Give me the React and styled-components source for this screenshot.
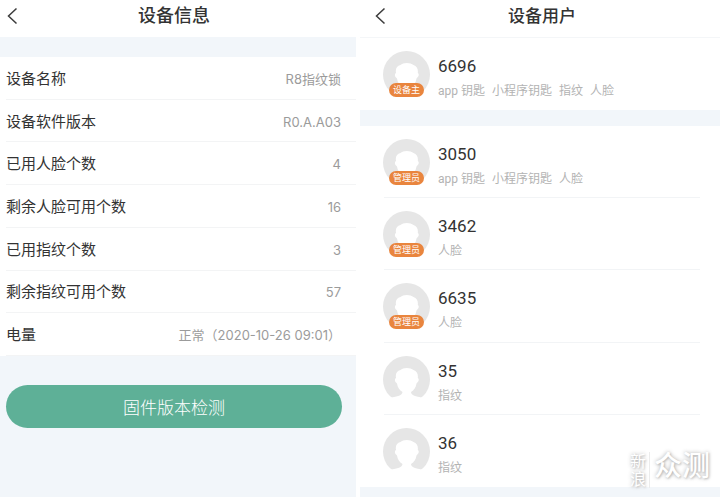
import React from "react";
import styled, { createGlobalStyle } from "styled-components";

const GlobalStyle = createGlobalStyle`
  *, *::before, *::after { box-sizing: border-box; }
  body {
    margin: 0;
    background: #ffffff;
    color: #333333;
    font-family: Inter, "Noto Sans CJK SC", sans-serif;
  }
  h1, h2, p, dl, dd, dt, ul { margin: 0; padding: 0; }
  ul { list-style: none; }
`;

const Page = styled.div`
  position: relative;
  display: grid;
  grid-template-columns: 356fr 360fr;
  column-gap: 4px;
  min-height: 100vh;
`;

const Screen = styled.section`
  display: flex;
  flex-direction: column;
  background: #f2f6fa;
`;

const Header = styled.header`
  display: grid;
  grid-template-columns: 40px 1fr 40px;
  align-items: center;
  height: ${(p) => (p.$lined ? 38 : 37)}px;
  padding: 0 ${(p) => (p.$lined ? 8 : 12)}px 5px ${(p) => (p.$lined ? 12 : 4)}px;
  background: #ffffff;
  border-bottom: ${(p) => (p.$lined ? "1px solid #f4f6f8" : "0")};
`;

const BackButton = styled.button`
  display: flex;
  justify-self: start;
  padding: 0 3px;
  border: 0;
  background: none;
  color: #3c3c3c;
`;

const Title = styled.h1`
  font-size: ${(p) => p.$size}px;
  font-weight: 500;
  line-height: 24px;
  text-align: center;
`;

const InfoList = styled.dl`
  display: grid;
  grid-auto-rows: 1fr;
  min-height: 299px;
  margin-top: 20px;
  padding-left: 6px;
  background: #ffffff;
`;

const InfoRow = styled.div`
  display: flex;
  align-items: center;
  justify-content: space-between;
  padding: 2px 15px 0 0;
  border-bottom: 1px solid #f3f4f5;
`;

const InfoLabel = styled.dt`
  font-size: 15px;
  line-height: 22px;
`;

const InfoValue = styled.dd`
  color: #9b9b9b;
  font-size: 13px;
  line-height: 20px;
`;

const CheckButton = styled.button`
  height: 43px;
  margin: 29px 14px 0 6px;
  border: 0;
  border-radius: 22px;
  background: #5eb097;
  color: #ffffff;
  font-family: inherit;
  font-size: 17px;
  font-weight: 300;
`;

const UserList = styled.ul`
  display: grid;
  grid-auto-rows: 1fr;
  min-height: ${(p) => (p.$owner ? 72 : 361)}px;
  margin-bottom: ${(p) => (p.$owner ? 16 : 0)}px;
  padding: 0 20px 0 24px;
  background: #ffffff;
`;

const UserRow = styled.li`
  display: flex;
  align-items: flex-start;
  gap: 8px;
  padding-top: 13px;
  border-bottom: 1px solid #f2f4f6;

  &:last-child { border-bottom: 0; }
`;

const AvatarBox = styled.div`
  position: relative;
  width: 47px;
  height: 47px;
  margin-left: -1px;
`;

const Badge = styled.span`
  position: absolute;
  bottom: 1px;
  left: 6px;
  width: 35px;
  border-radius: 7px;
  background: #e9853e;
  color: #ffffff;
  font-size: 9px;
  line-height: 14px;
  text-align: center;
`;

const UserName = styled.h2`
  padding-top: 4px;
  font-family: Roboto, "Noto Sans CJK SC", sans-serif;
  font-size: 17px;
  font-weight: 400;
  line-height: 22px;
`;

const KeyList = styled.p`
  display: flex;
  gap: 7px;
  padding-top: 4px;
  color: #b3b3b3;
  font-family: Roboto, "Noto Sans CJK SC", sans-serif;
  font-size: 12px;
  line-height: 20px;
`;

const Watermark = styled.div`
  position: absolute;
  right: 10px;
  bottom: 9px;
  display: flex;
  align-items: flex-start;
  gap: 4px;
  color: #ffffff;
  text-shadow: 0 0 4px #b0b0b0, 1px 1px 2px #cccccc;
`;

const WatermarkSide = styled.span`
  width: 20px;
  padding-right: 4px;
  border-right: 1px solid #ececec;
  font-size: 16px;
  line-height: 18px;
`;

const WatermarkMain = styled.span`
  font-size: 28px;
  font-weight: 500;
  line-height: 28px;
`;

const info = [
  ["设备名称", "R8指纹锁"],
  ["设备软件版本", "R0.A.A03"],
  ["已用人脸个数", "4"],
  ["剩余人脸可用个数", "16"],
  ["已用指纹个数", "3"],
  ["剩余指纹可用个数", "57"],
  ["电量", "正常（2020-10-26 09:01）"],
];

const owner = [
  { name: "6696", role: "设备主", keys: ["app 钥匙", "小程序钥匙", "指纹", "人脸"] },
];

const members = [
  { name: "3050", role: "管理员", keys: ["app 钥匙", "小程序钥匙", "人脸"] },
  { name: "3462", role: "管理员", keys: ["人脸"] },
  { name: "6635", role: "管理员", keys: ["人脸"] },
  { name: "35", keys: ["指纹"] },
  { name: "36", keys: ["指纹"] },
];

function Back() {
  return (
    <BackButton type="button" aria-label="返回">
      <svg width="12" height="18" viewBox="0 0 12 18" fill="none" stroke="currentColor" strokeWidth="1.5">
        <path d="M9.5 1.5 1.5 9l8 7.5" />
      </svg>
    </BackButton>
  );
}

function Avatar({ role }) {
  return (
    <AvatarBox>
      <svg width="47" height="47" viewBox="0 0 47 47" aria-hidden="true">
        <circle cx="23.5" cy="23.5" r="23.5" fill="#e6e6e6" />
        <path
          fill="#ffffff"
          d="M12.500 26c-1-1.500-.8-3.300.5-4-.8-4.500 1-7.500 4.500-8 2.500-2.800 10-2.900 13 .1 3.500 1.300 4.800 4 4.300 7.900 1.400.8 1.200 2.800 0 4l-1.300 1.500c-.5 4-2.500 6.500-5.500 8.500.3 3.300 4.500 4.700 12 5.500V48H7v-6.500c8-.8 12-2.200 12.500-5.500-3-2-5-4.500-5.500-8.500z"
        />
      </svg>
      {role && <Badge>{role}</Badge>}
    </AvatarBox>
  );
}

function User({ user }) {
  return (
    <UserRow>
      <Avatar role={user.role} />
      <div>
        <UserName>{user.name}</UserName>
        <KeyList>
          {user.keys.map((key) => (
            <span key={key}>{key}</span>
          ))}
        </KeyList>
      </div>
    </UserRow>
  );
}

export default function App() {
  return (
    <>
      <GlobalStyle />
      <Page>
        <Screen>
          <Header>
            <Back />
            <Title $size={18}>设备信息</Title>
          </Header>
          <InfoList>
            {info.map(([label, value]) => (
              <InfoRow key={label}>
                <InfoLabel>{label}</InfoLabel>
                <InfoValue>{value}</InfoValue>
              </InfoRow>
            ))}
          </InfoList>
          <CheckButton type="button">固件版本检测</CheckButton>
        </Screen>
        <Screen>
          <Header $lined>
            <Back />
            <Title $size={17}>设备用户</Title>
          </Header>
          <UserList $owner>
            {owner.map((user) => (
              <User key={user.name} user={user} />
            ))}
          </UserList>
          <UserList>
            {members.map((user) => (
              <User key={user.name} user={user} />
            ))}
          </UserList>
        </Screen>
        <Watermark>
          <WatermarkSide>新浪</WatermarkSide>
          <WatermarkMain>众测</WatermarkMain>
        </Watermark>
      </Page>
    </>
  );
}
